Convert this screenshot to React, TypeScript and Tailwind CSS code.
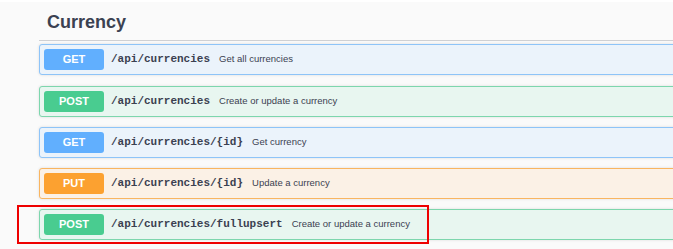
import React from 'react';

type Op = { method: 'GET' | 'POST' | 'PUT'; path: string; summary: string };

const ops: Op[] = [
  { method: 'GET', path: '/api/currencies', summary: 'Get all currencies' },
  { method: 'POST', path: '/api/currencies', summary: 'Create or update a currency' },
  { method: 'GET', path: '/api/currencies/{id}', summary: 'Get currency' },
  { method: 'PUT', path: '/api/currencies/{id}', summary: 'Update a currency' },
  { method: 'POST', path: '/api/currencies/fullupsert', summary: 'Create or update a currency' },
];

const styles = {
  GET: { row: 'bg-[#ebf3fb] border-[#8ec4f8]', badge: 'bg-[#61affe]' },
  POST: { row: 'bg-[#e8f6f0] border-[#7dd6ad]', badge: 'bg-[#49cc90]' },
  PUT: { row: 'bg-[#fbf1e6] border-[#f9b560]', badge: 'bg-[#fca130]' },
};

// spacing between rows in the shot isn't perfectly even
const gaps = ['mt-[3px]', 'mt-[11px]', 'mt-[10px]', 'mt-[10px]', 'mt-[10px]'];

export default function App() {
  return (
    <div
      className="relative w-[673px] h-[249px] overflow-hidden bg-[#fafafa] border-t-2 border-white"
      style={{ fontFamily: '"Liberation Sans", Arial, sans-serif' }}
    >
      <div className="pl-[39px] -mr-6">
        {/* Section heading */}
        <h4 className="pl-[8px] pt-[9px] pb-[7px] border-b border-[#cfd0d3] text-[18px] leading-[22px] font-bold text-[#3b4151]">
          Currency
        </h4>

        {/* Operations */}
        <div className="flex flex-col">
          {ops.map((op, i) => (
            <div
              key={i}
              className={`flex items-center h-[31px] px-[4px] border rounded-[3px] shadow-[0_0_3px_rgba(0,0,0,0.12)] ${gaps[i]} ${styles[op.method].row}`}
            >
              <span
                className={`w-[60px] h-[21px] flex items-center justify-center rounded-[3px] text-white font-bold text-[11px] ${styles[op.method].badge}`}
              >
                {op.method}
              </span>
              <span
                className="ml-[7px] font-bold text-[11px] text-[#3b4151]"
                style={{ fontFamily: '"Liberation Mono", "Courier New", monospace' }}
              >
                {op.path}
              </span>
              <span className="ml-[9px] text-[9.5px] text-[#3b4151]">{op.summary}</span>
            </div>
          ))}
        </div>
      </div>

      {/* Annotation highlight */}
      <div className="absolute left-[17px] top-[203px] w-[412px] h-[39px] border-2 border-[#ee0000]" />
    </div>
  );
}
